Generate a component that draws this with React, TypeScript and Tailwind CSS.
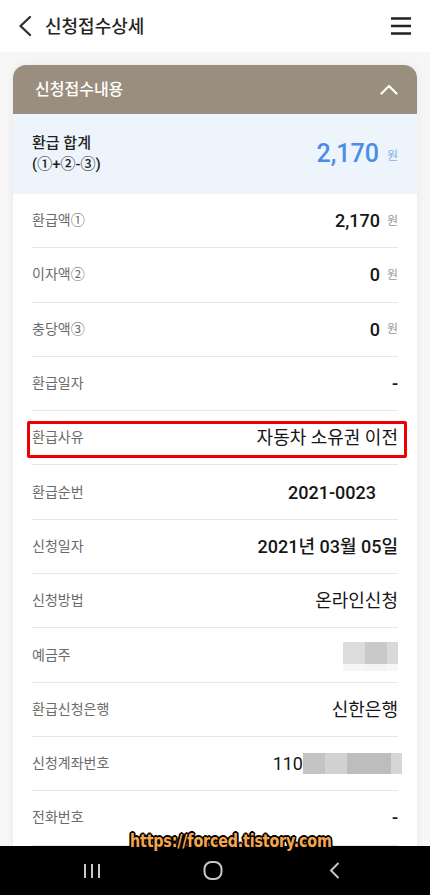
import React from 'react';

type Row = {
  label: string;
  value?: string;
  won?: boolean;
  bold?: boolean;
  pr?: string;
  mask?: 'owner' | 'account';
  highlight?: boolean;
};

const ROWS: Row[] = [
  { label: '환급액①', value: '2,170', won: true, bold: true },
  { label: '이자액②', value: '0', won: true, bold: true },
  { label: '충당액③', value: '0', won: true, bold: true },
  { label: '환급일자', value: '-', bold: true },
  { label: '환급사유', value: '자동차 소유권 이전', highlight: true },
  { label: '환급순번', value: '2021-0023', bold: true, pr: 'pr-[22px]' },
  { label: '신청일자', value: '2021년 03월 05일', bold: true },
  { label: '신청방법', value: '온라인신청' },
  { label: '예금주', mask: 'owner' },
  { label: '환급신청은행', value: '신한은행' },
  { label: '신청계좌번호', value: '110', mask: 'account' },
  { label: '전화번호', value: '-', bold: true },
];

const font = { fontFamily: "Roboto, 'Noto Sans CJK KR', sans-serif" };

function OwnerMask() {
  return (
    <div className="flex flex-col">
      <div className="flex h-[22px]">
        <div className="w-[22px] bg-[#dcdcdc]" />
        <div className="w-[22px] bg-[#c9c9c9]" />
        <div className="w-[11px] bg-[#d9d9d9]" />
      </div>
      <div className="flex h-[7px]">
        <div className="w-[22px] bg-[#f6f6f6]" />
        <div className="w-[22px] bg-[#f3f3f3]" />
        <div className="w-[11px] bg-[#f7f7f7]" />
      </div>
    </div>
  );
}

function AccountMask() {
  return (
    <div className="mr-[-4px] flex h-[21px]">
      <div className="w-[22px] bg-[#c4c4c4]" />
      <div className="w-[22px] bg-[#d2d2d2]" />
      <div className="w-[44px] bg-[#bdbdbd]" />
      <div className="w-[11px] bg-[#d6d6d6]" />
    </div>
  );
}

function DetailRow({ row }: { row: Row }) {
  return (
    <div className="relative mx-[19px] flex h-[54.3px] items-center justify-between border-b border-[#e6e6e6]">
      <span className="text-[14px] text-[#6b6b6b]">{row.label}</span>
      <div className={`flex items-center ${row.pr ?? ''}`}>
        {row.value && (
          <span
            className={`text-[18px] text-[#161616] ${row.bold ? 'font-medium' : ''}`}
          >
            {row.value}
          </span>
        )}
        {row.won && <span className="ml-[7px] text-[12px] text-[#9a9a9a]">원</span>}
        {row.mask === 'owner' && <div className="mt-[2px]"><OwnerMask /></div>}
        {row.mask === 'account' && <AccountMask />}
      </div>
      {row.highlight && (
        <div className="absolute left-[-5px] right-[-9px] top-[10px] h-[37px] rounded-[2px] border-[3px] border-[#ee0000]" />
      )}
    </div>
  );
}

export default function App() {
  return (
    <div
      className="relative flex h-[895px] w-[430px] flex-col overflow-hidden bg-[#f6f6f6]"
      style={font}
    >
      {/* Top bar */}
      <div className="flex h-[52px] shrink-0 items-center justify-between bg-white pl-[17px] pr-[18px]">
        <div className="flex items-center gap-[12px]">
          <svg width="16" height="22" viewBox="0 0 16 22" fill="none">
            <path d="M13 2 L3.5 11 L13 20" stroke="#333" strokeWidth="2.4" strokeLinecap="round" strokeLinejoin="round" />
          </svg>
          <span className="text-[18px] font-medium text-[#262626]">신청접수상세</span>
        </div>
        <svg width="22" height="20" viewBox="0 0 22 20" fill="none">
          <path d="M1 2.5 H21 M1 10 H21 M1 17.5 H21" stroke="#222" strokeWidth="2.6" />
        </svg>
      </div>

      {/* Content */}
      <div className="flex-1 overflow-hidden px-[13px] pt-[13px]">
        <div className="overflow-hidden rounded-t-[13px] bg-white shadow-[0_0_8px_rgba(0,0,0,0.06)]">
          <div className="flex h-[49px] items-center justify-between bg-[#9a8f7e] pl-[22px] pr-[19px]">
            <span className="text-[16px] font-medium text-white">신청접수내용</span>
            <svg width="18" height="11" viewBox="0 0 18 11" fill="none">
              <path d="M1.5 9.5 L9 2 L16.5 9.5" stroke="#fff" strokeWidth="2.2" strokeLinecap="round" strokeLinejoin="round" />
            </svg>
          </div>

          <div className="flex h-[80px] items-center justify-between bg-[#eef4fc] pl-[19px] pr-[19px]">
            <div className="text-[15px] font-medium leading-[21px] text-[#222]">
              <div>환급 합계</div>
              <div>(①+②-③)</div>
            </div>
            <div className="flex items-center">
              <span className="text-[25px] font-medium text-[#4a8de8]">2,170</span>
              <span className="ml-[8px] mt-[4px] text-[12px] text-[#7fb0ee]">원</span>
            </div>
          </div>

          {ROWS.map((row) => (
            <DetailRow key={row.label} row={row} />
          ))}
        </div>
      </div>

      {/* Android nav bar */}
      <div className="flex h-[49px] shrink-0 items-center gap-[61px] bg-black pl-[62px]">
        <div className="flex w-[60px] justify-center">
          <svg width="18" height="16" viewBox="0 0 18 16" fill="none">
            <path d="M2 1 V15 M9 1 V15 M16 1 V15" stroke="#c8c8c8" strokeWidth="2" />
          </svg>
        </div>
        <div className="flex w-[60px] justify-center">
          <svg width="20" height="19" viewBox="0 0 20 19" fill="none">
            <rect x="1.5" y="1" width="17" height="17" rx="7" stroke="#c8c8c8" strokeWidth="2" />
          </svg>
        </div>
        <div className="flex w-[60px] justify-center">
          <svg width="11" height="17" viewBox="0 0 11 17" fill="none">
            <path d="M9.5 1 L2 8.5 L9.5 16" stroke="#c8c8c8" strokeWidth="2" />
          </svg>
        </div>
      </div>

      {/* Watermark */}
      <div
        className="absolute left-[130px] top-[829px] origin-left scale-x-[0.84] whitespace-nowrap text-[17px] font-bold tracking-[-0.2px] text-[#f6a64a]"
        style={{
          fontFamily: "'DejaVu Sans', sans-serif",
          textShadow:
            '-2px 0 #000, 2px 0 #000, 0 -2px #000, 0 2px #000, -1.5px -1.5px #000, 1.5px 1.5px #000, -1.5px 1.5px #000, 1.5px -1.5px #000',
        }}
      >
        https://forced.tistory.com
      </div>
    </div>
  );
}
